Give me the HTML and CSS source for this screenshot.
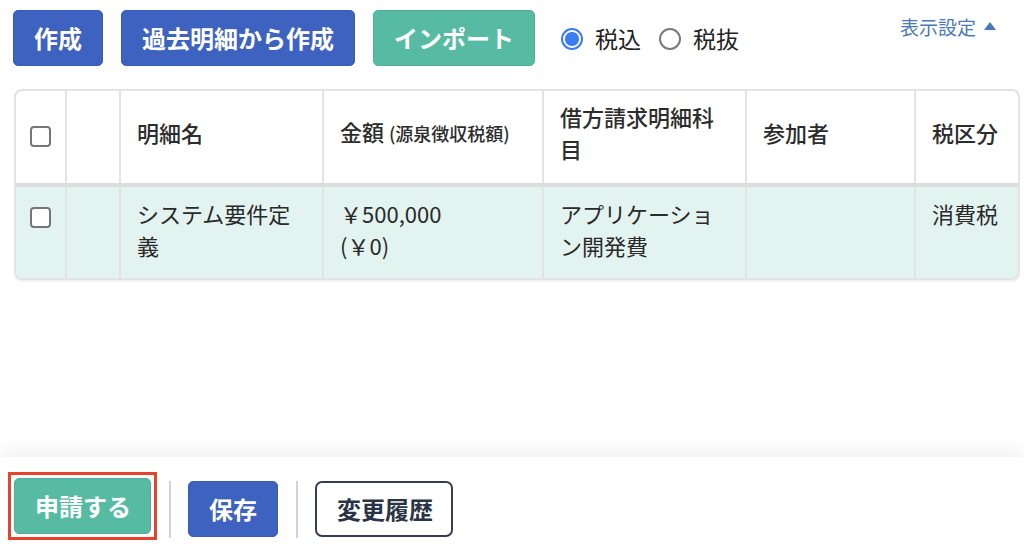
FILE: index.html
```html
<!DOCTYPE html>
<html lang="ja">
<head>
<meta charset="utf-8">
<title>明細</title>
<link rel="stylesheet" href="styles.css">
</head>
<body>
<div class="page">
  <main class="main">
    <div class="toolbar">
      <button class="btn btn-blue">作成</button>
      <button class="btn btn-blue">過去明細から作成</button>
      <button class="btn btn-green">インポート</button>
      <div class="radios">
        <label class="radio"><span class="radio-dot checked"></span><span>税込</span></label>
        <label class="radio"><span class="radio-dot"></span><span>税抜</span></label>
      </div>
      <a class="display-settings">表示設定<svg class="tri" width="12" height="8" viewBox="0 0 12 8"><polygon points="6,0 12,8 0,8" fill="#4a7ab6"/></svg></a>
    </div>

    <div class="table-wrap">
      <table class="items">
        <colgroup>
          <col class="c-check"><col class="c-blank"><col class="c-name"><col class="c-amount"><col class="c-account"><col class="c-people"><col class="c-tax">
        </colgroup>
        <thead>
          <tr>
            <th class="cell-check"><span class="checkbox"></span></th>
            <th></th>
            <th>明細名</th>
            <th>金額 <small>(源泉徴収税額)</small></th>
            <th>借方請求明細科目</th>
            <th>参加者</th>
            <th>税区分</th>
          </tr>
        </thead>
        <tbody>
          <tr>
            <td class="cell-check"><span class="checkbox"></span></td>
            <td></td>
            <td>システム要件定義</td>
            <td>￥500,000<br>(￥0)</td>
            <td>アプリケーション開発費</td>
            <td></td>
            <td>消費税</td>
          </tr>
        </tbody>
      </table>
    </div>
  </main>

  <footer class="footer">
    <span class="highlight"><button class="btn btn-green btn-apply">申請する</button></span>
    <span class="divider"></span>
    <button class="btn btn-blue">保存</button>
    <span class="divider"></span>
    <button class="btn btn-outline">変更履歴</button>
  </footer>
</div>
</body>
</html>
```

FILE: styles.css
```css
* { box-sizing: border-box; }

html, body {
  margin: 0;
  padding: 0;
  background: #ffffff;
}

body {
  font-family: "Noto Sans CJK JP", "Noto Sans", sans-serif;
  color: #2a2a2a;
  overflow: hidden;
}

.page {
  height: 553px;
  display: flex;
  flex-direction: column;
}

.main {
  flex: 1;
  padding: 10px 4px 0 14px;
  min-height: 0;
}

.toolbar {
  display: flex;
  align-items: center;
  height: 56px;
  margin-left: -1px;
}

.btn {
  height: 56px;
  padding: 0 20px;
  border-radius: 5px;
  border: 1px solid transparent;
  font-family: "Noto Sans CJK JP", sans-serif;
  font-size: 24px;
  font-weight: 700;
  line-height: 1;
  color: #ffffff;
  cursor: pointer;
  white-space: nowrap;
  display: block;
}

.toolbar .btn + .btn { margin-left: 18px; }

.btn-blue {
  background: #3d62bf;
  border-color: #3a5cb4;
}

.btn-green {
  background: #57bba4;
  border-color: #4fae97;
}

.btn-outline {
  background: #ffffff;
  border: 2px solid #363f52;
  color: #2b3445;
  border-radius: 7px;
}

.radios {
  display: flex;
  align-items: center;
  margin-left: 26px;
  gap: 18px;
}

.radio {
  display: flex;
  align-items: center;
  gap: 12px;
  font-size: 23px;
  color: #222;
}

.radio-dot {
  width: 22px;
  height: 22px;
  border-radius: 50%;
  border: 2px solid #7a7a7a;
  background: #fff;
  display: inline-block;
  margin-top: 2px;
}

.radio-dot.checked {
  border: 2px solid #3b7cf4;
  background: radial-gradient(circle, #3b7cf4 0 6.5px, #ffffff 7.5px);
}

.display-settings {
  margin-left: auto;
  margin-right: 24px;
  align-self: flex-start;
  margin-top: 3px;
  display: flex;
  align-items: center;
  gap: 8px;
  font-size: 19px;
  color: #4a7ab6;
  text-decoration: none;
}

.tri { margin-top: -2px; }

.table-wrap {
  margin-top: 23px;
  border: 2px solid #e3e3e3;
  border-radius: 8px;
  overflow: hidden;
  box-shadow: 0 2px 1px rgba(0, 0, 0, 0.06);
}

.items {
  border-collapse: collapse;
  table-layout: fixed;
  width: 1180px;
  font-size: 22px;
  line-height: 32px;
}

.c-check { width: 50px; }
.c-blank { width: 54px; }
.c-name { width: 203px; }
.c-amount { width: 220px; }
.c-account { width: 203px; }
.c-people { width: 169px; }
.c-tax { width: 281px; }

.items th, .items td {
  border-left: 2px solid #e3e3e3;
  padding: 0 16px;
  text-align: left;
}

.items th:first-child, .items td:first-child { border-left: none; }

.items th {
  height: 94px;
  padding-bottom: 10px;
  font-weight: 500;
  color: #2c2c2c;
  vertical-align: middle;
  border-bottom: 4px solid #dddddd;
}

.items th small {
  font-size: 18px;
  font-weight: 500;
}

.items td {
  height: 91px;
  background: #e3f3f0;
  vertical-align: top;
  padding-top: 10px;
  padding-bottom: 17px;
  color: #2a2a2a;
}

.items th.cell-check {
  padding: 0 0 10px 0;
  text-align: center;
}

.items td.cell-check {
  padding: 10px 0 0 0;
  text-align: center;
}

.checkbox {
  display: inline-block;
  width: 21px;
  height: 21px;
  border: 2px solid #767676;
  border-radius: 4px;
  background: #ffffff;
  vertical-align: middle;
}

.footer {
  height: 96px;
  flex: none;
  display: flex;
  align-items: flex-start;
  padding: 15px 0 0 8px;
  background: #ffffff;
  box-shadow: 0 -8px 16px rgba(0, 0, 0, 0.05);
}

.highlight {
  display: block;
  border: 3px solid #e8432a;
  padding: 3px;
}

.btn-apply { width: 137px; }

.footer .btn-blue { width: 90px; margin-top: 9px; }
.footer .btn-outline { width: 138px; margin-top: 9px; }

.divider {
  width: 2px;
  height: 57px;
  background: #d2d2d2;
  margin: 9px 17px 0 12px;
}

.divider + .btn + .divider { margin-left: 18px; }
```
